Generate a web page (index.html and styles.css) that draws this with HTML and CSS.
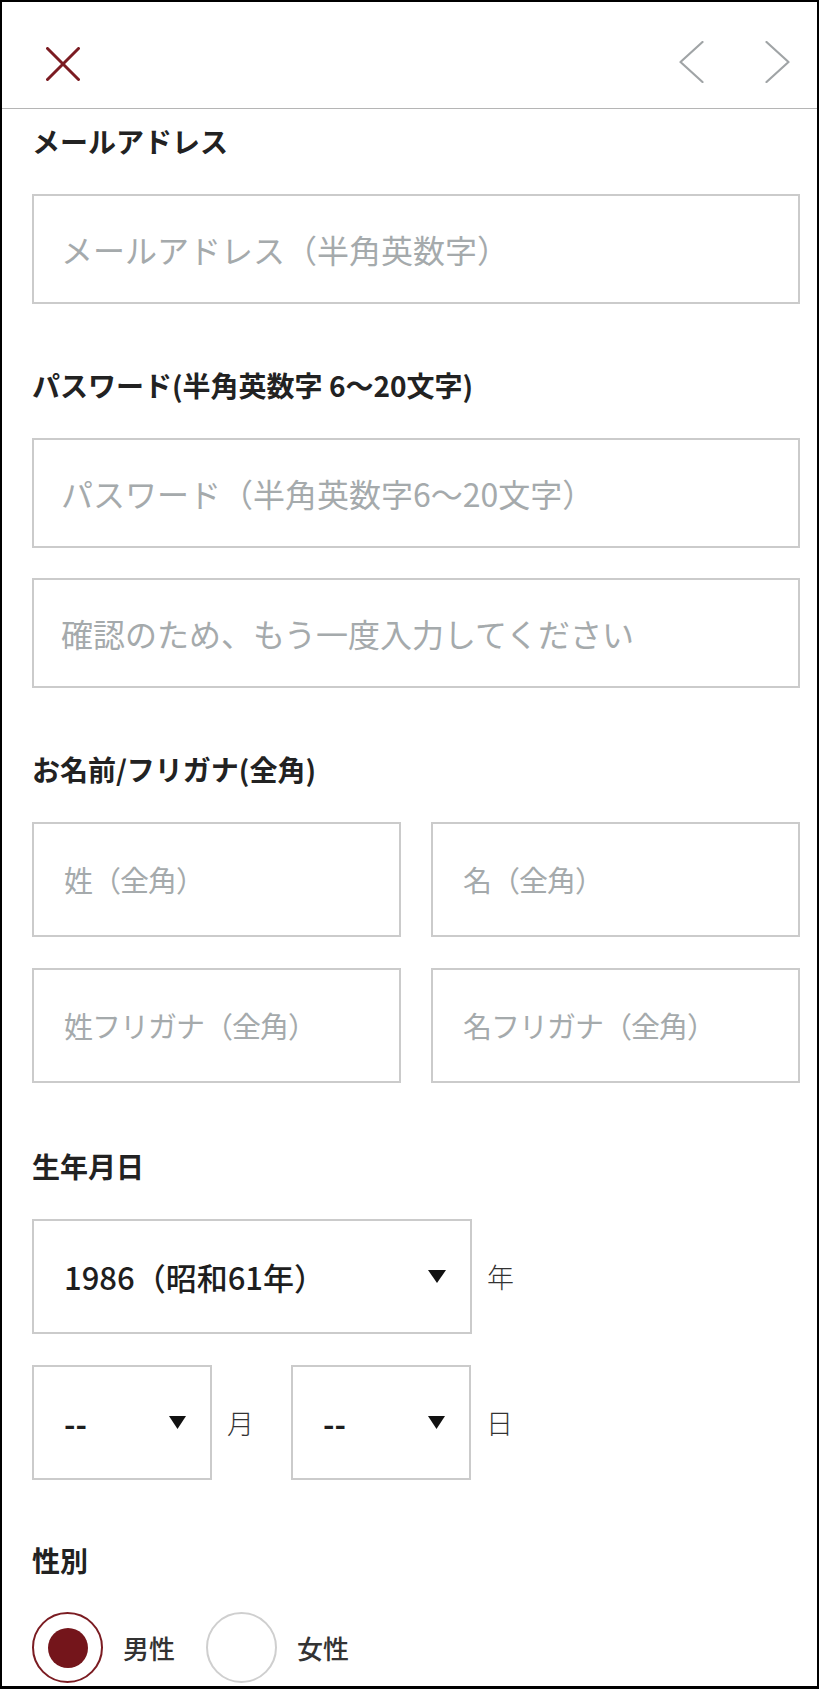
FILE: index.html
```html
<!DOCTYPE html>
<html lang="ja">
<head>
<meta charset="utf-8">
<title>会員登録</title>
<link rel="stylesheet" href="styles.css">
</head>
<body>
<div class="frame">
  <header class="header">
    <svg class="close" width="34" height="34" viewBox="0 0 34 34" aria-label="閉じる">
      <line x1="1.5" y1="1.5" x2="32.5" y2="32.5"/>
      <line x1="32.5" y1="1.5" x2="1.5" y2="32.5"/>
    </svg>
    <div class="nav">
      <svg class="chev" width="25" height="42" viewBox="0 0 25 42"><polyline points="23.5,1 1.5,21 23.5,41"/></svg>
      <svg class="chev" width="25" height="42" viewBox="0 0 25 42"><polyline points="1.5,1 23.5,21 1.5,41"/></svg>
    </div>
  </header>

  <main class="content">
    <section class="section first">
      <h2 class="label">メールアドレス</h2>
      <div class="input"><span class="ph">メールアドレス（半角英数字）</span></div>
    </section>

    <section class="section">
      <h2 class="label">パスワード(半角英数字 6〜20文字)</h2>
      <div class="input"><span class="ph">パスワード（半角英数字6〜20文字）</span></div>
      <div class="input next"><span class="ph">確認のため、もう一度入力してください</span></div>
    </section>

    <section class="section">
      <h2 class="label">お名前/フリガナ(全角)</h2>
      <div class="name-grid">
        <div class="input tall"><span class="ph name">姓（全角）</span></div>
        <div class="input tall"><span class="ph name">名（全角）</span></div>
        <div class="input tall"><span class="ph name">姓フリガナ（全角）</span></div>
        <div class="input tall"><span class="ph name">名フリガナ（全角）</span></div>
      </div>
    </section>

    <section class="section birth">
      <h2 class="label">生年月日</h2>
      <div class="date-row">
        <div class="select year"><span class="val">1986（昭和61年）</span><svg class="arrow" width="18" height="13" viewBox="0 0 18 13"><polygon points="0,0 18,0 9,13"/></svg></div>
        <span class="unit">年</span>
      </div>
      <div class="date-row md">
        <div class="select small"><span class="val dash">--</span><svg class="arrow" width="17" height="13" viewBox="0 0 17 13"><polygon points="0,0 17,0 8.5,13"/></svg></div>
        <span class="unit">月</span>
        <div class="select small day"><span class="val dash">--</span><svg class="arrow" width="17" height="13" viewBox="0 0 17 13"><polygon points="0,0 17,0 8.5,13"/></svg></div>
        <span class="unit">日</span>
      </div>
    </section>

    <section class="section gender">
      <h2 class="label">性別</h2>
      <div class="radio-row">
        <span class="radio checked"></span><span class="radio-text">男性</span>
        <span class="radio"></span><span class="radio-text">女性</span>
      </div>
    </section>
  </main>
</div>
</body>
</html>
```
FILE: styles.css
```css
* { box-sizing: border-box; }

body {
  margin: 0;
  background: #fff;
  font-family: "Noto Sans CJK JP", "Noto Sans", sans-serif;
  color: #222;
}

.frame {
  width: 819px;
  height: 1689px;
  border: 2px solid #000;
  border-bottom-width: 3px;
  overflow: hidden;
  background: #fff;
}

.header {
  height: 107px;
  border-bottom: 1px solid #b5b5b5;
  display: flex;
  justify-content: space-between;
  align-items: flex-start;
  padding: 0 27px 0 44px;
}

.close {
  margin-top: 45px;
  stroke: #7b1c22;
  stroke-width: 3;
  stroke-linecap: round;
}

.nav {
  display: flex;
  gap: 61px;
  margin-top: 39px;
}

.chev polyline {
  fill: none;
  stroke: #a0a4a6;
  stroke-width: 2.2;
  stroke-linecap: round;
  stroke-linejoin: round;
}

.content {
  padding: 0 17px 0 30px;
}

.section { margin-top: 61px; }
.section.first { margin-top: 12px; }
.section.birth { margin-top: 63px; }
.section.gender { margin-top: 60px; }

.label {
  margin: 0 0 33px;
  font-size: 28px;
  font-weight: 700;
  line-height: 40px;
  color: #222;
}

.input {
  height: 110px;
  border: 2px solid #cbcbcb;
  display: flex;
  align-items: center;
  padding-left: 27px;
}
.input.next { margin-top: 30px; }
.input.tall { height: 115px; padding-left: 30px; }

.ph {
  font-size: 32px;
  color: #a5aaac;
  line-height: 1;
}
.ph.name {
  font-size: 29px;
  letter-spacing: -1px;
}

.name-grid {
  display: grid;
  grid-template-columns: 1fr 1fr;
  column-gap: 30px;
  row-gap: 31px;
  width: 768px;
}

.date-row {
  display: flex;
  align-items: center;
}
.date-row.md { margin-top: 31px; }

.select {
  height: 115px;
  border: 2px solid #cbcbcb;
  display: flex;
  align-items: center;
  justify-content: space-between;
  padding: 0 24px 0 30px;
}
.select.year { width: 440px; }
.select.small { width: 180px; padding-right: 24px; }
.select.day { margin-left: 37px; }

.val {
  font-size: 31px;
  line-height: 1;
  color: #1e1e1e;
  font-weight: 500;
}
.val.dash { font-weight: 700; }

.arrow { fill: #111; }

.unit {
  margin-left: 15px;
  font-size: 27px;
  font-weight: 300;
  color: #333;
  line-height: 1;
}

.radio-row {
  display: flex;
  align-items: center;
  margin-top: -1px;
}

.radio {
  width: 71px;
  height: 71px;
  border-radius: 50%;
  border: 2px solid #cfcfcf;
  display: flex;
  align-items: center;
  justify-content: center;
}
.radio.checked { border-color: #7b1c22; }
.radio.checked::after {
  content: "";
  width: 40px;
  height: 40px;
  border-radius: 50%;
  background: #74151b;
}

.radio-text {
  font-size: 26px;
  font-weight: 500;
  color: #333;
  margin-left: 20px;
  margin-right: 31px;
  line-height: 1;
}
```
